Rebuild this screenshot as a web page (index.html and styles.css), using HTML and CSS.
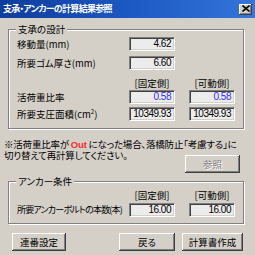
FILE: index.html
```html
<!DOCTYPE html>
<html lang="ja">
<head>
<meta charset="utf-8">
<title>支承・アンカーの計算結果参照</title>
<link rel="stylesheet" href="styles.css">
</head>
<body>
<div class="window">
  <div class="titlebar">
    <span class="title">支承・アンカーの計算結果参照</span>
    <span class="close"><svg width="8" height="7" viewBox="0 0 8 7"><path d="M0.5 0.5 L7.5 6.5 M7.5 0.5 L0.5 6.5" stroke="#000" stroke-width="1.6"/></svg></span>
  </div>
  <div class="content">
    <div class="group g1">
      <span class="legend">支承の設計</span>
      <div class="row">
        <span class="label">移動量(mm)</span>
        <span class="field">4.62</span>
      </div>
      <div class="row r2">
        <span class="label">所要ゴム厚さ(mm)</span>
        <span class="field">6.60</span>
      </div>
      <div class="row head">
        <span class="label"></span>
        <span class="colhead">[固定側]</span>
        <span class="colhead">[可動側]</span>
      </div>
      <div class="row">
        <span class="label">活荷重比率</span>
        <span class="field blue">0.58</span>
        <span class="field blue">0.58</span>
      </div>
      <div class="row r4">
        <span class="label">所要支圧面積(cm<sup>2</sup>)</span>
        <span class="field">10349.93</span>
        <span class="field">10349.93</span>
      </div>
    </div>

    <div class="note">
      <span class="line1">※活荷重比率が <span class="out">Out</span> になった場合、落橋防止「考慮する」に</span>
      <span class="line2">切り替えて再計算してください。</span>
      <button class="btn ref" disabled>参照</button>
    </div>

    <div class="group g2">
      <span class="legend">アンカー条件</span>
      <div class="row head">
        <span class="label"></span>
        <span class="colhead">[固定側]</span>
        <span class="colhead">[可動側]</span>
      </div>
      <div class="row r-anchor">
        <span class="label narrow">所要アンカーボルトの本数(本)</span>
        <span class="field">16.00</span>
        <span class="field">16.00</span>
      </div>
    </div>

    <div class="buttons">
      <button class="btn b1">連番設定</button>
      <div class="right">
        <button class="btn b2">戻る</button>
        <button class="btn b3">計算書作成</button>
      </div>
    </div>
  </div>
</div>
</body>
</html>
```
FILE: styles.css
```css
html, body {
  margin: 0;
  padding: 0;
}
body {
  width: 255px;
  height: 255px;
  overflow: hidden;
  background: #d4d0c8;
  font-family: "Noto Sans CJK JP", sans-serif;
  font-size: 9.5px;
  color: #000;
  font-feature-settings: "palt";
}
.window {
  width: 255px;
  height: 255px;
  display: flex;
  flex-direction: column;
}
.titlebar {
  height: 18px;
  background: linear-gradient(90deg, #0d3d9c 0%, #1c58c2 50%, #3476da 100%);
  display: flex;
  align-items: center;
  justify-content: space-between;
  padding: 0 3px 0 3px;
  flex: none;
}
.title {
  color: #fff;
  font-weight: bold;
  font-size: 9px;
  letter-spacing: -0.7px;
  line-height: 18px;
  white-space: nowrap;
}
.close {
  width: 13px;
  height: 11px;
  box-sizing: border-box;
  background: #d4d0c8;
  box-shadow: inset -1px -1px #404040, inset 1px 1px #fff, inset -2px -2px #808080;
  display: flex;
  align-items: center;
  justify-content: center;
  padding-bottom: 1px;
}
.content {
  padding: 11px 11px 0 4px;
}
.group {
  position: relative;
  margin-left: 4px;
  border: 1px solid #808080;
  box-shadow: inset 1px 1px 0 #fff, 1px 1px 0 #fff;
}
.g1 {
  padding: 7px 8px 7px 8px;
}
.g2 {
  margin-top: 8px;
  padding: 6px 8px 6px 8px;
}
.legend {
  position: absolute;
  top: -7px;
  left: 7px;
  padding: 0 2px;
  background: #d4d0c8;
  line-height: 12px;
  white-space: nowrap;
}
.row {
  display: grid;
  grid-template-columns: minmax(0, 1fr) 46px 46px;
  column-gap: 14px;
  height: 14px;
  align-items: center;
}
.row .field:only-of-type {
  grid-column: 2;
}
.r2 {
  margin-top: 5px;
}
.g1 .head {
  margin-top: 6px;
}
.r4 {
  margin-top: 3px;
}
.r-anchor {
  margin-top: 1px;
}
.label {
  white-space: nowrap;
  line-height: 12px;
}
.narrow {
  font-size: 9px;
  letter-spacing: -0.8px;
}
.label sup {
  font-size: 6px;
  line-height: 0;
  vertical-align: 4px;
}
.colhead {
  text-align: center;
  white-space: nowrap;
  line-height: 12px;
}
.field {
  display: block;
  height: 14px;
  box-sizing: border-box;
  background: #ececec;
  border-top: 1px solid #808080;
  border-left: 1px solid #808080;
  border-bottom: 1px solid #fff;
  border-right: 1px solid #fff;
  box-shadow: inset 1px 1px #404040, inset -1px -1px #d4d0c8;
  text-align: right;
  padding-right: 3px;
  font-family: "Liberation Sans", sans-serif;
  font-size: 10px;
  letter-spacing: -0.5px;
  line-height: 12px;
}
.blue {
  color: #3030ff;
}
.note {
  margin-top: 10px;
  display: grid;
  grid-template-columns: minmax(0, 1fr) auto;
  line-height: 10px;
  font-size: 9.5px;
  letter-spacing: -0.2px;
  white-space: nowrap;
}
.line1 {
  grid-column: 1 / 3;
}
.line2 {
  grid-column: 1;
  align-self: start;
}
.out {
  color: #ff2a2a;
  font-family: "Liberation Sans", sans-serif;
  font-weight: bold;
}
.btn {
  height: 18px;
  box-sizing: border-box;
  margin: 0;
  padding: 0;
  border: none;
  background: #d4d0c8;
  box-shadow: inset -1px -1px #404040, inset 1px 1px #fff, inset -2px -2px #808080;
  font-family: "Noto Sans CJK JP", sans-serif;
  font-feature-settings: "palt";
  font-size: 9.5px;
  line-height: 16px;
  color: #000;
}
.ref {
  grid-column: 2;
  margin-top: 5px;
  margin-right: 4px;
  width: 55px;
  color: #808080;
  text-shadow: 1px 1px 0 #fff;
}
.buttons {
  margin-top: 9px;
  padding: 0 1px 0 8px;
  display: flex;
  justify-content: space-between;
}
.right {
  display: flex;
  gap: 7px;
}
.b1 {
  width: 54px;
}
.b2 {
  width: 56px;
}
.b3 {
  width: 61px;
}
```
